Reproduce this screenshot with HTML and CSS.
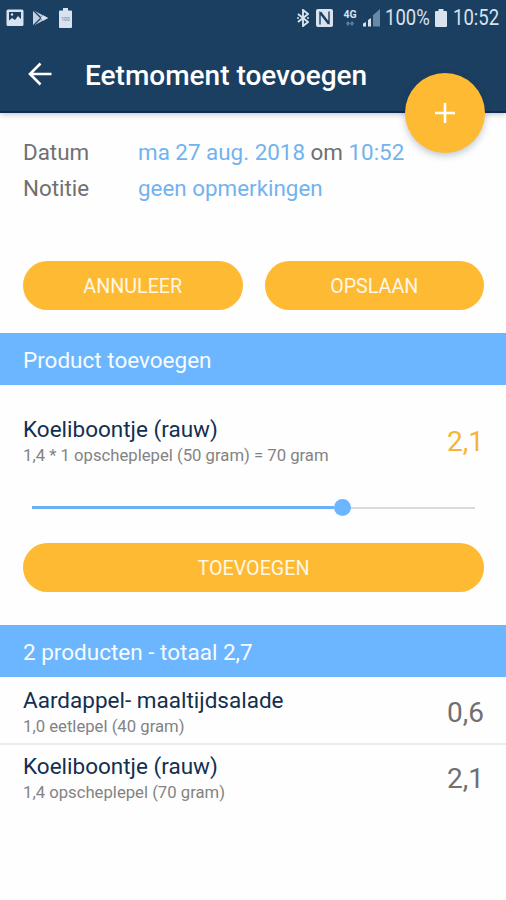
FILE: index.html
```html
<!DOCTYPE html>
<html lang="nl">
<head>
<meta charset="utf-8">
<title>Eetmoment toevoegen</title>
<link rel="stylesheet" href="styles.css">
</head>
<body>
<header class="header">
  <div class="status">
    <div class="status-left">
      <svg width="18" height="18" viewBox="0 0 18 18"><path fill="#d8e3ef" fill-rule="evenodd" d="M2 0.500h14q1.500 0 1.500 1.500v13.500q0 1.500-1.500 1.500H2q-1.500 0-1.500-1.500V2Q.5.5 2 .5zM3 3v8.500l3-2.500 3 2 3-4 3 3V3z"/><circle cx="6" cy="5.500" r="1.200" fill="#d8e3ef"/></svg>
      <svg class="play" width="17" height="18" viewBox="0 0 17 18"><path d="M1 1L16 9 1 17z" fill="#c4d2e0"/><path d="M1 1l10 10M1 17L11 7" stroke="#1b3f61" stroke-width="1.300"/><path d="M11 6.300L16 9l-5 2.700L8.500 9z" fill="#d8e3ef"/></svg>
      <svg width="13" height="20" viewBox="0 0 13 20"><path d="M4 0h5v2.500h3q1 0 1 1V19q0 1-1 1H1q-1 0-1-1V3.500q0-1 1-1h3z" fill="#d8e3ef"/><text class="battery-label" x="6.500" y="13">100</text></svg>
    </div>
    <div class="status-right">
      <svg class="bluetooth" width="12" height="18" viewBox="0 0 12 18"><path d="M1 5l10 8-5 4V1l5 4-10 8" fill="none" stroke="#d8e3ef" stroke-width="1.900"/><path d="M0 9h2M10 9h2" stroke="#d8e3ef" stroke-width="1.700"/></svg>
      <svg class="nfc" width="17" height="18" viewBox="0 0 17 18"><rect x="0" y="0" width="17" height="18" rx="2" fill="#d8e3ef"/><path d="M4 15.500V4l8.500 11M4.500 3L13 14V2.500" fill="none" stroke="#1b3f61" stroke-width="1.400"/></svg>
      <div class="network"><span>4G</span><svg width="8" height="5" viewBox="0 0 8 5"><path d="M2 0l2 2.500H0zM0 2.500h4L2 5zM6 0l2 2.500H4zM4 2.500h4L6 5z" fill="#5d80a2"/></svg></div>
      <svg class="signal" width="17" height="18" viewBox="0 0 17 18"><path d="M0 14.500l3-1.500v4.500H0zM5 11l3-2v8.500H5z" fill="#d8e3ef"/><path d="M10 6l2-1.500v13h-2zM12 4.500L17 0v17.500h-5z" fill="#6888a7"/></svg>
      <span class="percent"><span class="status-text">100%</span></span>
      <svg class="battery" width="12" height="18" viewBox="0 0 12 18"><path d="M3.500 0h5v2H11q1 0 1 1v14q0 1-1 1H1q-1 0-1-1V3q0-1 1-1h2.500z" fill="#d8e3ef"/></svg>
      <span class="clock"><span class="status-text">10:52</span></span>
    </div>
  </div>
  <div class="toolbar">
    <svg width="24" height="24" viewBox="0 0 24 24"><path d="M23.500 12H2M12.500 1.500L2 12l10.500 10.500" fill="none" stroke="#fff" stroke-width="2.600"/></svg>
    <h1 class="title">Eetmoment toevoegen</h1>
  </div>
  <button class="fab" aria-label="Toevoegen"><svg width="20" height="20" viewBox="0 0 20 20"><path d="M10 0v20M0 10h20" stroke="#fff" stroke-width="2.600"/></svg></button>
</header>
<main>
  <dl class="details">
    <dt>Datum</dt><dd><span class="link">ma 27 aug. 2018</span> om <span class="link">10:52</span></dd>
    <dt>Notitie</dt><dd><span class="link">geen opmerkingen</span></dd>
  </dl>
  <div class="actions">
    <button class="button">ANNULEER</button>
    <button class="button">OPSLAAN</button>
  </div>
  <h2 class="band">Product toevoegen</h2>
  <section class="editor">
    <div class="row row-edit">
      <div><div class="name">Koeliboontje (rauw)</div><div class="sub">1,4 * 1 opscheplepel (50 gram) = 70 gram</div></div>
      <div class="value accent">2,1</div>
    </div>
    <div class="slider"><div class="filled"></div><div class="thumb"></div><div class="rest"></div></div>
    <button class="button wide">TOEVOEGEN</button>
  </section>
  <h2 class="band">2 producten - totaal 2,7</h2>
  <section>
    <div class="row">
      <div><div class="name">Aardappel- maaltijdsalade</div><div class="sub">1,0 eetlepel (40 gram)</div></div>
      <div class="value">0,6</div>
    </div>
    <div class="row">
      <div><div class="name">Koeliboontje (rauw)</div><div class="sub">1,4 opscheplepel (70 gram)</div></div>
      <div class="value">2,1</div>
    </div>
  </section>
</main>
</body>
</html>
```
FILE: styles.css
```css
* { box-sizing: border-box; }
body {
  margin: 0;
  width: 506px;
  height: 900px;
  overflow: hidden;
  background: #fefefe;
  font-family: Roboto, sans-serif;
  font-size: 22.5px;
  color: #707070;
}
svg { display: block; flex: none; }
.header {
  position: relative;
  height: 113px;
  background: #1b3f61;
  border-bottom: 2px solid #102c50;
  box-shadow: 0 1px 6px rgba(20, 40, 70, .3);
}
.status { display: flex; justify-content: space-between; height: 36px; padding: 0 8px 0 6px; }
.status-left { display: flex; align-items: center; gap: 10px; }
.play { margin: 0 0 0 -2px; }
.status-right { display: flex; align-items: center; color: #d8e3ef; }
.battery-label { font-size: 5px; fill: #607b94; text-anchor: middle; }
.nfc { margin-left: 7px; }
.network { display: flex; flex-direction: column; align-items: center; gap: 1px; width: 14px; margin-left: 10px; font-size: 10.5px; line-height: 10px; font-weight: 700; }
.signal { margin-left: 6px; }
.status-text { display: block; font-size: 21.5px; line-height: 24px; white-space: nowrap; transform: scaleX(.86); transform-origin: left; }
.percent { width: 44px; margin-left: 5px; }
.battery { margin-left: 6px; }
.clock { width: 45px; margin-left: 6px; }
.toolbar { display: flex; align-items: center; gap: 33px; height: 76px; padding-left: 28px; }
.title { margin: 0; padding-top: 3px; font-size: 28px; line-height: 36px; font-weight: 500; color: #fff; white-space: nowrap; }
.fab {
  position: absolute;
  left: 405px;
  top: 73px;
  width: 80px;
  height: 80px;
  display: grid;
  place-items: center;
  padding: 0;
  border: 0;
  border-radius: 50%;
  background: #feba33;
  box-shadow: 0 3px 7px rgba(20, 40, 70, .25);
}
.details {
  display: grid;
  grid-template-columns: 115px 1fr;
  grid-auto-rows: 36px;
  height: 148px;
  margin: 0;
  padding: 21px 23px 0;
  line-height: 36px;
  white-space: nowrap;
  font-size: 22.4px;
}
.details dd { margin: 0; }
.link { color: #72b3ee; }
.actions { display: grid; grid-template-columns: 1fr 1fr; gap: 22px; padding: 0 22px 23px 23px; }
.button {
  height: 49px;
  padding: 2px 0 0;
  border: 0;
  border-radius: 25px;
  background: #feba33;
  color: #fff7e3;
  font: 400 19.7px/24px Roboto, sans-serif;
}
.band {
  margin: 0;
  height: 52px;
  padding: 1px 23px 0;
  background: #6bb6ff;
  color: #f8fcff;
  font-size: 22.5px;
  font-weight: 400;
  line-height: 52px;
}
.editor { height: 240px; padding: 23px 22px 0 23px; }
.row { display: flex; justify-content: space-between; align-items: center; height: 66px; padding: 5px 22px 0 23px; }
.row + .row { border-top: 2px solid #ebebeb; padding-top: 3px; }
.row .value { padding-top: 1px; }
.row-edit { padding: 0; }
.name { color: #132f50; font-size: 22.5px; line-height: 28px; }
.sub { color: #838383; font-size: 16.7px; line-height: 25px; }
.value { font-size: 28px; line-height: 34px; }
.accent { color: #f5b43a; }
.slider { display: flex; align-items: center; height: 17px; margin: 25px 9px 27px; }
.filled { width: 302px; height: 3px; background: #6bb1f8; }
.thumb { width: 17px; height: 17px; border-radius: 50%; background: #6bb6ff; }
.rest { flex: 1; height: 2px; background: #d9d9de; }
.wide { display: block; width: 100%; }
```
